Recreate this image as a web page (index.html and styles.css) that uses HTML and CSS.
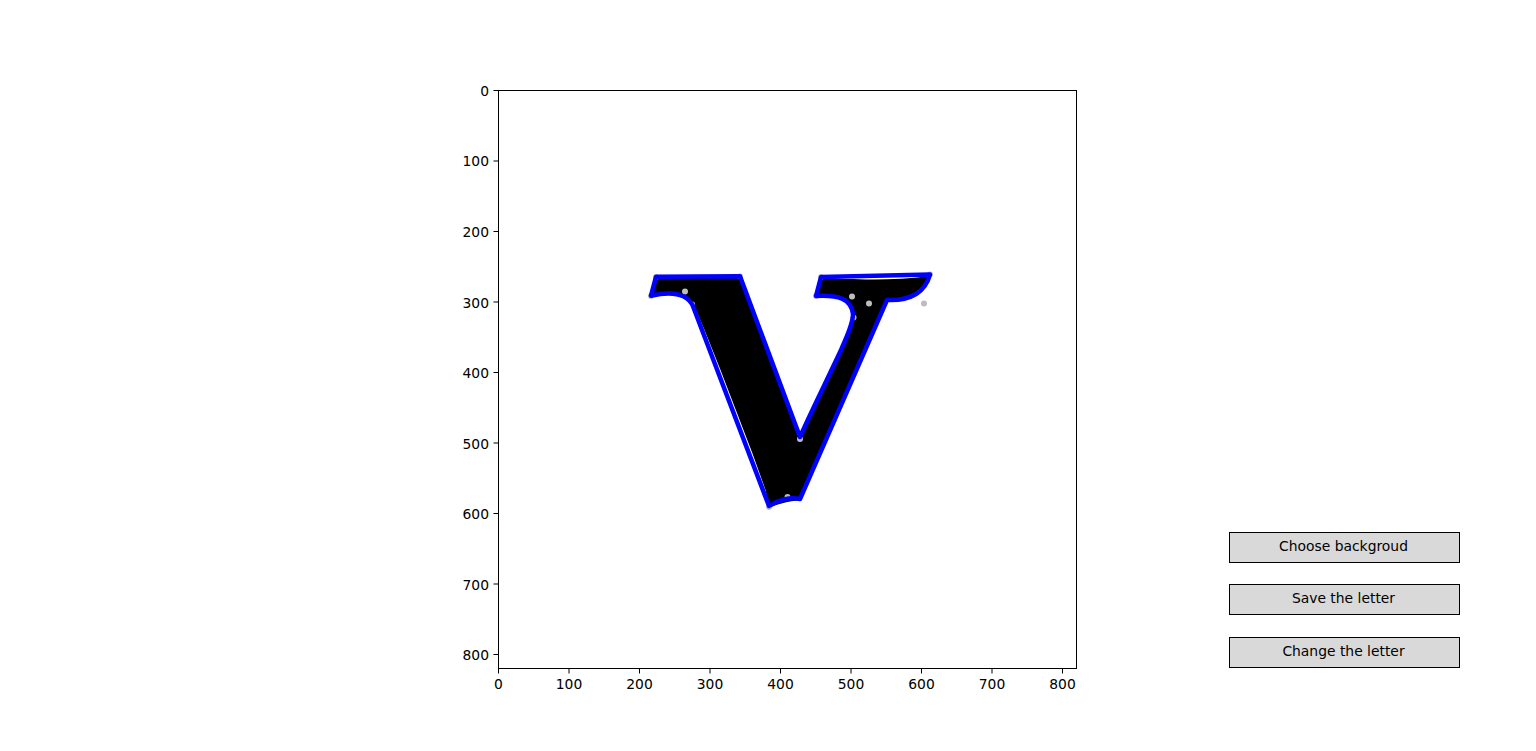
FILE: index.html
```html
<!DOCTYPE html>
<html lang="en">
<head>
<meta charset="utf-8">
<title>Letter editor</title>
<link rel="stylesheet" href="styles.css">
</head>
<body>
<main class="figure">
  <svg class="plot" width="650" height="620" viewBox="450 80 650 620" xmlns="http://www.w3.org/2000/svg">
    <path class="glyph" d="M657 278 L740 277 L800 437 C812 410 828 378 841 350 C845 340 853 325 853 314 C851 298 838 295 816 296 L821 278 C850 279 890 281.500 929 276 C925 292 912 301 887 300 L800 500.500 C788 501 778 504 769.500 507.500 L765.500 490 L752.300 453 L720.500 370 L704.500 330 L697 312 C686 293 672 291 651 296 Z"/>
    <g class="points">
      <circle cx="685" cy="291.500" r="3"/>
      <circle cx="692.500" cy="304" r="2.500"/>
      <circle cx="852" cy="296.500" r="3"/>
      <circle cx="869" cy="303.500" r="3"/>
      <circle cx="924" cy="303.500" r="3"/>
      <circle cx="853.500" cy="317.500" r="3"/>
      <circle cx="800" cy="439" r="3"/>
      <circle cx="787.500" cy="497" r="3"/>
      <circle cx="769" cy="507" r="3"/>
      <circle cx="651" cy="296" r="3"/>
      <circle cx="656" cy="277" r="3"/>
      <circle cx="740" cy="276.500" r="3"/>
      <circle cx="816" cy="296" r="3"/>
      <circle cx="821" cy="277" r="3"/>
      <circle cx="930" cy="274.500" r="3"/>
    </g>
    <path class="outline" d="M656 276.800 L740 276.300 L800 437 C812 410 828 378 841 350 C845 340 853 325 853 314 C851 298 838 295 816 296 L821 277 L930 274.600 C925 292 912 301 887 300 L800 499 C790 497 778 500 769 506 L692.500 305 C686 293 672 291 651 295.700 Z"/>
    <rect class="frame" x="498.500" y="90.500" width="578" height="578"/>
    <path class="ticks" d="M498.500 668.500v5M569 668.500v5M639.500 668.500v5M710 668.500v5M780.500 668.500v5M851 668.500v5M921.500 668.500v5M992 668.500v5M1062.500 668.500v5M498.500 90.500h-5M498.500 161h-5M498.500 231.500h-5M498.500 302h-5M498.500 372.500h-5M498.500 443h-5M498.500 513.500h-5M498.500 584h-5M498.500 654.500h-5"/>
    <g class="xlabels">
      <text x="498.500" y="689">0</text>
      <text x="569" y="689">100</text>
      <text x="639.500" y="689">200</text>
      <text x="710" y="689">300</text>
      <text x="780.500" y="689">400</text>
      <text x="851" y="689">500</text>
      <text x="921.500" y="689">600</text>
      <text x="992" y="689">700</text>
      <text x="1062.500" y="689">800</text>
    </g>
    <g class="ylabels">
      <text x="489" y="96">0</text>
      <text x="489" y="166">100</text>
      <text x="489" y="237">200</text>
      <text x="489" y="308">300</text>
      <text x="489" y="378">400</text>
      <text x="489" y="449">500</text>
      <text x="489" y="519">600</text>
      <text x="489" y="590">700</text>
      <text x="489" y="660">800</text>
    </g>
  </svg>
  <div class="actions">
    <button class="action" type="button">Choose backgroud</button>
    <button class="action" type="button">Save the letter</button>
    <button class="action action-last" type="button">Change the letter</button>
  </div>
</main>
</body>
</html>
```
FILE: styles.css
```css
html, body {
  margin: 0;
  padding: 0;
  background: #fff;
}

.figure {
  display: flex;
  width: 1536px;
  height: 751px;
  overflow: hidden;
  font-family: "DejaVu Sans", sans-serif;
  color: #000;
}

.plot {
  display: block;
  flex: none;
  margin: 80px 0 0 450px;
}

.glyph {
  fill: #000;
}

.points circle {
  fill: #bdbdbd;
}

.outline {
  fill: none;
  stroke: #0000ff;
  stroke-width: 4.500;
  stroke-linejoin: round;
}

.frame {
  fill: none;
  stroke: #000;
  stroke-width: 1;
}

.ticks {
  fill: none;
  stroke: #000;
  stroke-width: 1;
}

.xlabels text,
.ylabels text {
  font-family: "DejaVu Sans", sans-serif;
  font-size: 13.89px;
  fill: #000;
}

.xlabels text {
  text-anchor: middle;
}

.ylabels text {
  text-anchor: end;
}

.actions {
  display: flex;
  flex-direction: column;
  gap: 21px;
  flex: none;
  width: 231px;
  margin: 532px 0 0 129px;
}

.action {
  display: block;
  height: 31px;
  width: 231px;
  margin: 0;
  padding: 0 2px 3px 0;
  box-sizing: border-box;
  background: #d9d9d9;
  border: 1px solid #000;
  border-radius: 0;
  font-family: "DejaVu Sans", sans-serif;
  font-size: 13.89px;
  color: #000;
  text-align: center;
}

.action-last {
  margin-top: 1px;
}
```
